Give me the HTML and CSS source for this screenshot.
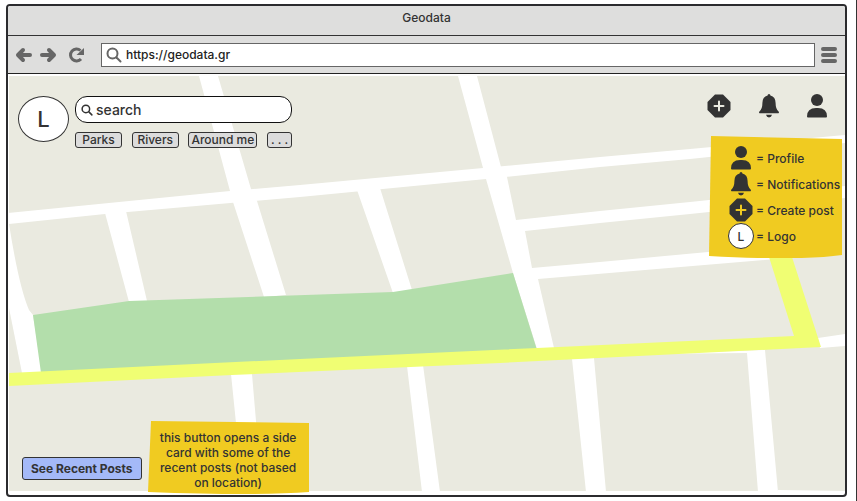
FILE: index.html
```html
<!DOCTYPE html>
<html lang="en">
<head>
<meta charset="utf-8">
<title>Geodata</title>
<link rel="stylesheet" href="styles.css">
</head>
<body>
<svg class="defs" aria-hidden="true">
  <symbol id="user" viewBox="0 0 20 24"><circle cx="10" cy="6" r="6"/><path d="M0 22.500Q0 14 9 14h2q9 0 9 8.500 0 1-1 1H1q-1 0-1-1z"/></symbol>
  <symbol id="bell" viewBox="0 0 20 24"><path d="M10 0q1.400 0 1.400 1.600 5.200 1.400 5.200 7.400 0 6 3 8.600.8 1-.2 1.600H.6q-1-.6-.2-1.600 3-2.600 3-8.600 0-6 5.200-7.400Q8.600 0 10 0zM7 20.800h6q-.6 2.600-3 2.600t-3-2.600z"/></symbol>
  <symbol id="plus" viewBox="0 0 24 24"><path d="M8 .5h8L23.500 8v8L16 23.500H8L.5 16V8z"/><path class="cross" d="M12 7.500v9M7.500 12h9"/></symbol>
  <symbol id="lens" viewBox="0 0 16 16"><circle class="line" cx="6.500" cy="6.500" r="5"/><path class="line" d="M10.500 10.500l4 4"/></symbol>
</svg>
<div class="browser">
  <header class="titlebar">Geodata</header>
  <nav class="toolbar" aria-label="Browser">
    <button class="tool" aria-label="Back"><svg width="18" height="16" viewBox="0 0 18 16"><path d="M8 3L3 8l5 5M4 8h11"/></svg></button>
    <button class="tool" aria-label="Forward"><svg width="18" height="16" viewBox="0 0 18 16"><path d="M10 3l5 5-5 5M14 8H3"/></svg></button>
    <button class="tool reload" aria-label="Reload"><svg width="18" height="16" viewBox="0 0 18 16"><path d="M14 12a6 6 0 1 1-.5-8.500"/><path class="solid" d="M17 1v7H9.500z"/></svg></button>
    <label class="address">
      <svg width="16" height="16"><use href="#lens"/></svg>
      <input type="text" aria-label="Address" value="https://geodata.gr">
    </label>
    <button class="tool menu" aria-label="Menu"><svg width="16" height="16" viewBox="0 0 16 16"><path d="M2 2h12M2 8h12M2 14h12"/></svg></button>
  </nav>
  <main class="page">
    <svg class="map" viewBox="8 74 837 421" preserveAspectRatio="none" aria-hidden="true">
      <path class="land" d="M9 76H845V491L778 490V491H9z"/>
      <g class="road">
        <path d="M8 213L230 191 300 185 483 168 600 157 690 149 845 135V143L690 159 600 167 486 179 300 197 105 214 9 224z"/>
        <path d="M199 76H218L251 189 257 201 286 295 264 297 233 202 230 191z"/>
        <path d="M458 76H477L501 167 507 177 516 220 600 211 690 202 845 186V198L690 214 600 223 525 231 532 268 600 262 708 252 800 243V257L538 279 554 348 537 349 513 273 486 179 483 168z"/>
        <path d="M105 213L126 211 147 301 129 302zM357 190L380 188 412 290 393 293z"/>
        <path d="M8 222L9 224Q19 287 29 310L33 315 42 373H22L9 308H8z"/>
        <path d="M231 374H252L262 492H243zM407 366L423 365 440 492H422zM572 359L594 358 606 492H586zM640 354L765 350 778 492H758L747 353zM818 338L845 334V346L820 348z"/>
      </g>
      <path class="park" d="M33 315L129 301 393 292 513 273 537 350 41 373z"/>
      <path class="highway" d="M9 373L300 359 537 348 794 336 769 257H792L821 347 500 363 232 375 9 386z"/>
    </svg>
    <header class="top">
      <a class="logo" href="#" aria-label="Home">L</a>
      <form class="finder">
        <label class="search">
          <svg width="12" height="12"><use href="#lens"/></svg>
          <input type="text" aria-label="Search places" value="search">
        </label>
        <div class="filters">
          <button type="button">Parks</button>
          <button type="button">Rivers</button>
          <button type="button">Around me</button>
          <button type="button" class="more">. . .</button>
        </div>
      </form>
      <nav class="actions" aria-label="Account">
        <button aria-label="Create post"><svg width="24" height="24"><use href="#plus"/></svg></button>
        <button aria-label="Notifications"><svg width="20" height="24"><use href="#bell"/></svg></button>
        <button aria-label="Profile"><svg width="20" height="24"><use href="#user"/></svg></button>
      </nav>
    </header>
    <aside class="legend">
      <svg class="paper" viewBox="0 0 133 122" preserveAspectRatio="none" aria-hidden="true"><path d="M2 0L133 3V119Q90 125 0 120z"/></svg>
      <ul>
        <li><svg width="20" height="24"><use href="#user"/></svg><span>= Profile</span></li>
        <li><svg width="20" height="24"><use href="#bell"/></svg><span>= Notifications</span></li>
        <li><svg width="24" height="24"><use href="#plus"/></svg><span>= Create post</span></li>
        <li><b class="badge">L</b><span>= Logo</span></li>
      </ul>
    </aside>
    <footer class="bottom">
      <button class="recent">See Recent Posts</button>
      <aside class="note">
        <svg class="paper" viewBox="0 0 161 73" preserveAspectRatio="none" aria-hidden="true"><path d="M3 0L161 2V71Q110 75 0 71z"/></svg>
        <p>this button opens a side card with some of the recent posts (not based on location)</p>
      </aside>
    </footer>
  </main>
</div>
</body>
</html>
```
FILE: styles.css
```css
* { box-sizing: border-box; }
body {
  margin: 0;
  min-height: 100vh;
  display: flex;
  padding: 4px 9px 4px 6px;
  border-right: 1px solid #333;
  background: #fff;
  color: #333;
  font: 500 12px/15px Inter, "Open Sans", sans-serif;
}
button, input { font: inherit; color: inherit; padding: 0; margin: 0; border: 0; background: none; }
button { cursor: pointer; }
svg { display: block; flex: none; fill: currentColor; }
.defs { position: absolute; width: 0; height: 0; }
.cross { fill: none; stroke: var(--cross, #eaeae0); stroke-width: 2; stroke-linecap: round; }
.line { fill: none; stroke: currentColor; stroke-width: 2; stroke-linecap: round; }

.browser {
  flex: 1;
  display: flex;
  flex-direction: column;
  border: 2px solid #2b2b2e;
  border-radius: 4px;
  overflow: hidden;
}
.titlebar {
  height: 30px;
  padding-top: 4px;
  background: #dededd;
  border-bottom: 1px solid #333;
  text-align: center;
}
.toolbar {
  display: flex;
  align-items: center;
  gap: 6px;
  height: 38px;
  padding: 0 8px 0 7px;
  background: #dededd;
  border-bottom: 1px solid #222;
  color: #666;
}
.tool svg { fill: none; stroke: currentColor; stroke-width: 4; stroke-linecap: round; stroke-linejoin: round; }
.tool .solid { fill: currentColor; stroke: none; }
.reload { margin: 0 10px 0 4px; }
.reload svg { stroke-width: 3; stroke-linecap: butt; }
.address {
  flex: 1;
  display: flex;
  align-items: center;
  gap: 4px;
  height: 24px;
  padding: 0 4px;
  background: #fff;
  border: 1px solid #666;
}
.address input { flex: 1; min-width: 0; color: #222; }

.page { position: relative; flex: 1; display: flex; flex-direction: column; }
.map { position: absolute; inset: 0; width: 100%; height: 100%; }
.land { fill: #eaeae0; }
.road { fill: #fff; }
.park { fill: #b3deab; }
.highway { fill: #f0fe73; }

.top { position: relative; display: flex; align-items: flex-start; padding: 20px 18px 0 10px; }
.logo {
  display: grid;
  place-items: center;
  width: 51px;
  height: 46px;
  margin: 2px 6px 0 0;
  border: 1px solid #333;
  border-radius: 50%;
  background: #fff;
  color: inherit;
  font-size: 22px;
  text-decoration: none;
}
.finder { width: 217px; margin-top: 2px; }
.search {
  display: flex;
  align-items: center;
  gap: 3px;
  height: 27px;
  padding: 0 5px;
  border: 1px solid #111;
  border-radius: 12px;
  background: #fff;
  font-size: 14px;
}
.search .line, .search svg { stroke-width: 3; }
.search input { flex: 1; min-width: 0; }
.filters { display: flex; justify-content: space-between; margin-top: 9px; }
.filters button {
  height: 16px;
  min-width: 47px;
  padding: 0 2px;
  border: 1px solid #333;
  border-radius: 3px;
  background: #dcdcdc;
  line-height: 14px;
}
.filters .more { min-width: 25px; }
.actions { display: flex; gap: 28px; margin-left: auto; }

.paper { position: absolute; inset: 0; width: 100%; height: 100%; fill: #f0cb21; }
.legend { position: absolute; top: 62px; right: 3px; width: 133px; height: 122px; padding: 9px 0 0 18px; --cross: #f0cb21; }
.legend ul { position: relative; margin: 0; padding: 0; list-style: none; }
.legend li { display: grid; grid-template-columns: 28px auto; justify-content: start; gap: 1px; align-items: center; justify-items: center; height: 26px; white-space: nowrap; }
.legend span { justify-self: start; }
.badge {
  display: grid;
  place-items: center;
  width: 26px;
  height: 26px;
  border: 1px solid #333;
  border-radius: 50%;
  background: #fff;
  font-weight: 500;
}

.bottom { position: relative; display: flex; align-items: center; gap: 6px; margin-top: auto; padding: 0 14px 1px; }
.recent {
  height: 23px;
  margin-top: 22px;
  padding: 0 8px;
  border: 1px solid #333;
  border-radius: 3px;
  background: #a4b9f8;
  font-weight: 700;
}
.note { position: relative; width: 161px; padding: 9px 10px 4px; text-align: center; }
.note p { position: relative; margin: 0; }
```
